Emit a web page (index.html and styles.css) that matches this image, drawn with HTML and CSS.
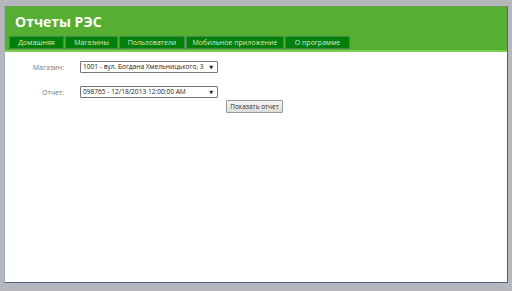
FILE: index.html
```html
<html lang="ru">
<head>
    <meta charset="UTF-8">
    <title>Отчеты РЭС</title>
    <link rel="stylesheet" href="styles.css">
</head>
<body>
    <div class="page">
        <div class="header">
            <h1 class="title">Отчеты РЭС</h1>
            <ul class="menu">
                <li>Домашняя</li>
                <li>Магазины</li>
                <li>Пользователи</li>
                <li>Мобильное приложение</li>
                <li>О программе</li>
            </ul>
        </div>
        <div class="main">
            <div class="row">
                <span class="label">Магазин:</span>
                <div class="select"><span class="value">1001 - вул. Богдана Хмельницького, 3</span><span class="arrow">&#9660;</span></div>
            </div>
            <div class="row">
                <span class="label">Отчет:</span>
                <div class="select"><span class="value">098765 - 12/18/2013 12:00:00 AM</span><span class="arrow">&#9660;</span></div>
            </div>
            <div class="actions">
                <button class="btn">Показать отчет</button>
            </div>
        </div>
    </div>
</body>
</html>
```

FILE: styles.css
```css
*{
    box-sizing: border-box;
    margin: 0;
    padding: 0;
}
body{
    background: #b6b7bc;
    padding: 6px 4px 0 4px;
    font-family: "Open Sans", "DejaVu Sans", sans-serif;
}
.page{
    background: #fff;
    height: 277px;
    border: 1px solid #4d6185;
    border-top-color: #6a9a5a;
    border-left-color: #a0b0c0;
}
.header{
    background: #56ae32;
    border-bottom: 2px solid #7ccf4f;
    padding: 0 0 1px 4px;
}
.title{
    color: #fff;
    font-size: 14px;
    font-weight: bold;
    height: 29px;
    line-height: 30px;
    padding-left: 6px;
}
.menu{
    list-style: none;
    display: flex;
}
.menu li{
    background: #037f0b;
    color: #d6ebd3;
    font-size: 7px;
    height: 13px;
    line-height: 12px;
    border: 1px solid #3e8d49;
    margin-right: 1px;
    text-align: center;
}
.menu li:nth-child(1){ width: 55px; }
.menu li:nth-child(2){ width: 53px; }
.menu li:nth-child(3){ width: 66px; }
.menu li:nth-child(4){ width: 98px; }
.menu li:nth-child(5){ width: 65px; }
.main{
    padding: 9px 0 0 0;
    width: 278px;
}
.row{
    display: flex;
    align-items: center;
    height: 12px;
    margin-bottom: 13px;
}
.label{
    width: 75px;
    padding-right: 16px;
    text-align: right;
    color: #777;
    font-size: 7px;
}
.select{
    position: relative;
    display: flex;
    width: 138px;
    height: 12px;
    border: 1px solid #777;
    border-radius: 1px;
    font-size: 6.6px;
    line-height: 10px;
    color: #222;
    padding-left: 2px;
    white-space: nowrap;
}
.value{
    overflow: hidden;
    width: 126px;
}
.arrow{
    position: absolute;
    right: 4px;
    top: 0;
    font-size: 5px;
}
.actions{
    display: flex;
    justify-content: flex-end;
    margin-top: -11px;
}
.btn{
    font-family: inherit;
    font-size: 6.5px;
    color: #333;
    height: 13px;
    width: 57px;
    padding: 0;
    background: linear-gradient(#f6f6f6, #dcdcdc);
    border: 1px solid #999;
    border-radius: 1px;
}
```
